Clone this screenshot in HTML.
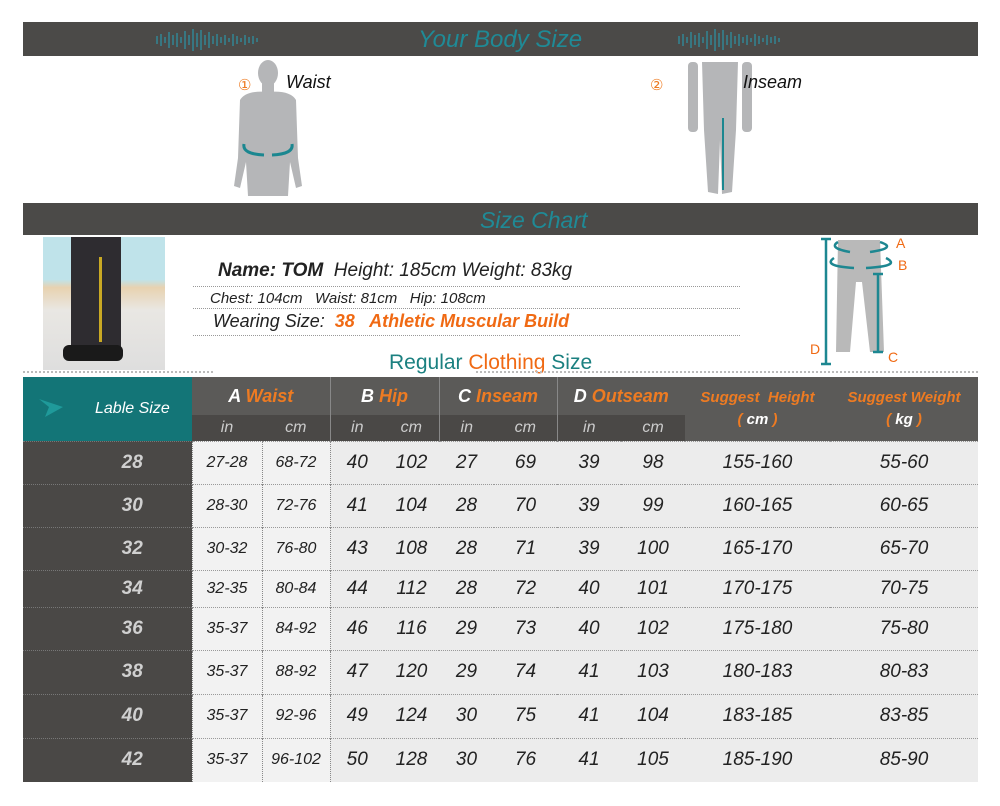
<!DOCTYPE html>
<html><head><meta charset="utf-8"><style>
*{margin:0;padding:0;box-sizing:border-box}
body{width:1000px;height:806px;background:#fff;position:relative;overflow:hidden;font-family:"Liberation Sans",sans-serif}
.a{position:absolute}
.bar{background:#4b4a48;left:23px;width:955px}
.teal{color:#1f8a96}
.or{color:#ee7b22}
table{position:absolute;left:23px;top:377px;border-collapse:collapse;table-layout:fixed;font-style:italic}
td{padding:0;text-align:center;color:#222;font-size:19px}
.h1 td{height:38px;background:#5b5a58;font-weight:bold;font-size:18px;color:#fff}
.h2 td{height:26px;background:#4a4846;color:#ccc;font-size:16px}
.r td{background:#ececec;border-top:1px dotted #999}
.r td.l{background:#4a4846;color:#d0d0d0;font-weight:bold;font-size:19px;border-top:1px dotted #777;padding-left:50px}
.r td.w{background:#f2f2f2;font-size:16px;border-left:1px dotted #888;border-right:1px dotted #888}
</style></head><body>
<div class="a bar" style="top:22px;height:34px"></div>
<div class="a teal" style="left:418px;top:26px;font-size:24px;font-style:italic">Your Body Size</div>
<svg class="a" style="left:155px;top:27px" width="150" height="26"><g stroke="#2f8fa0" stroke-width="1.3">
<path d="M2 9v8M6 7v12M10 10v6M14 5v16M18 8v10M22 6v14M26 10v6M30 4v18M34 8v10M38 2v22M42 6v14M46 3v20M50 8v10M54 5v16M58 9v8M62 7v12M66 10v6M70 8v10M74 11v4M78 7v12M82 9v8M86 11v4M90 8v10M94 10v6M98 9v8M102 11v4"/></g></svg>
<svg class="a" style="left:677px;top:27px" width="150" height="26"><g stroke="#2f8fa0" stroke-width="1.3">
<path d="M2 9v8M6 7v12M10 10v6M14 5v16M18 8v10M22 6v14M26 10v6M30 4v18M34 8v10M38 2v22M42 6v14M46 3v20M50 8v10M54 5v16M58 9v8M62 7v12M66 10v6M70 8v10M74 11v4M78 7v12M82 9v8M86 11v4M90 8v10M94 10v6M98 9v8M102 11v4"/></g></svg>
<!-- figure 1 -->
<svg class="a" style="left:230px;top:58px" width="80" height="140"><g fill="#b5b6b8">
<ellipse cx="38" cy="15" rx="10" ry="13"/><rect x="32" y="24" width="12" height="12"/>
<path d="M10 42 Q16 32 38 34 Q60 32 66 42 L68 100 L72 128 L66 130 L60 104 L58 138 L18 138 L16 104 L10 130 L4 128 L8 100Z"/></g>
<g stroke="#1b8790" stroke-width="3" fill="none"><path d="M14 86 Q12 96 34 97"/><path d="M62 86 Q64 96 42 97"/></g></svg>
<div class="a or" style="left:238px;top:76px;font-size:15px">①</div>
<div class="a" style="left:286px;top:72px;font-size:18px;font-style:italic;color:#111">Waist</div>
<!-- figure 2 -->
<svg class="a" style="left:680px;top:60px" width="80" height="136"><g fill="#b5b6b8">
<rect x="8" y="2" width="10" height="70" rx="4"/><rect x="62" y="2" width="10" height="70" rx="4"/>
<path d="M22 2 H58 L56 70 L52 132 L42 134 L40 80 L38 134 L28 132 L24 70Z"/></g>
<path d="M43 58 V130" stroke="#1b8790" stroke-width="2"/></svg>
<div class="a or" style="left:650px;top:76px;font-size:15px">②</div>
<div class="a" style="left:743px;top:72px;font-size:18px;font-style:italic;color:#111">Inseam</div>

<div class="a bar" style="top:203px;height:32px"></div>
<div class="a teal" style="left:480px;top:207px;font-size:23px;font-style:italic">Size Chart</div>
<!-- photo -->
<div class="a" style="left:43px;top:237px;width:122px;height:133px;background:linear-gradient(#bfe3ea 0,#bfe3ea 32%,#e8d2b0 38%,#e9e7e3 55%,#dedede 100%)">
<div class="a" style="left:28px;top:0;width:50px;height:120px;background:#2e2c30"></div>
<div class="a" style="left:56px;top:20px;width:3px;height:85px;background:#c9a924"></div>
<div class="a" style="left:20px;top:108px;width:60px;height:16px;background:#1a1a1a;border-radius:6px"></div></div>
<div class="a" style="left:218px;top:260px;font-size:19px;font-style:italic;color:#222"><b>Name: TOM</b>&nbsp; Height: 185cm Weight: 83kg</div>
<div class="a" style="left:193px;top:286px;width:547px;border-top:1px dotted #999"></div>
<div class="a" style="left:210px;top:290px;font-size:15px;font-style:italic;color:#222">Chest: 104cm&nbsp;&nbsp; Waist: 81cm&nbsp;&nbsp; Hip: 108cm</div>
<div class="a" style="left:193px;top:308px;width:547px;border-top:1px dotted #999"></div>
<div class="a" style="left:213px;top:311px;font-size:18px;font-style:italic;color:#222">Wearing Size:&nbsp; <b style="color:#f06a14">38&nbsp;&nbsp; Athletic Muscular Build</b></div>
<div class="a" style="left:193px;top:335px;width:547px;border-top:1px dotted #999"></div>
<div class="a" style="left:389px;top:351px;font-size:21px;color:#1b8080">Regular <span style="color:#f06a14">Clothing</span> Size</div>
<div class="a" style="left:23px;top:371px;width:190px;border-top:2px dotted #bbb"></div>
<div class="a" style="left:476px;top:371px;width:502px;border-top:2px dotted #bbb"></div>
<!-- pants icon -->
<svg class="a" style="left:810px;top:236px" width="100" height="130">
<path d="M28 4 H70 L74 116 H60 L52 46 L46 46 L40 116 H26Z" fill="#b9b9b9"/>
<g stroke="#1d8791" stroke-width="2.5" fill="none"><path d="M16 3V128M11 3H21M11 128H21"/><path d="M68 38V116M63 38H73M63 116H73"/>
<path d="M28 6 Q18 12 40 16 M60 16 Q88 12 70 6"/><path d="M24 22 Q12 30 44 32 M56 32 Q92 30 76 22"/></g>
<text x="86" y="12" fill="#f06a14" font-size="14" font-family="Liberation Sans">A</text>
<text x="88" y="34" fill="#f06a14" font-size="14" font-family="Liberation Sans">B</text>
<text x="0" y="118" fill="#f06a14" font-size="14" font-family="Liberation Sans">D</text>
<text x="78" y="126" fill="#f06a14" font-size="14" font-family="Liberation Sans">C</text></svg>

<table>
<colgroup><col style="width:169px"><col style="width:70px"><col style="width:68px"><col style="width:54px"><col style="width:55px"><col style="width:55px"><col style="width:63px"><col style="width:64px"><col style="width:64px"><col style="width:145px"><col style="width:148px"></colgroup>
<tr class="h1"><td rowspan="2" style="background:#137577;color:#fff;font-weight:normal;font-size:16px;text-align:left;padding-left:72px;position:relative"><svg style="position:absolute;left:16px;top:22px" width="26" height="20"><path d="M0 0 L24 8 L6 18 L10 8Z" fill="#1f9a9a"/></svg>Lable Size</td>
<td colspan="2" style="border-right:1px solid #888">A <span class="or">Waist</span></td><td colspan="2" style="border-right:1px solid #888">B <span class="or">Hip</span></td><td colspan="2" style="border-right:1px solid #888">C <span class="or">Inseam</span></td><td colspan="2">D <span class="or">Outseam</span></td>
<td rowspan="2" style="font-size:15px;line-height:22px;vertical-align:top;padding-top:10px"><span class="or">Suggest&nbsp; Height<br>( </span>cm<span class="or"> )</span></td>
<td rowspan="2" style="font-size:15px;line-height:22px;vertical-align:top;padding-top:10px"><span class="or">Suggest Weight<br>( </span>kg<span class="or"> )</span></td></tr>
<tr class="h2"><td>in</td><td style="border-right:1px solid #888">cm</td><td>in</td><td style="border-right:1px solid #888">cm</td><td>in</td><td style="border-right:1px solid #888">cm</td><td>in</td><td>cm</td></tr>
<tr class="r" style="height:43px"><td class="l">28</td><td class="w">27-28</td><td class="w">68-72</td><td>40</td><td>102</td><td>27</td><td>69</td><td>39</td><td>98</td><td>155-160</td><td>55-60</td></tr>
<tr class="r" style="height:43px"><td class="l">30</td><td class="w">28-30</td><td class="w">72-76</td><td>41</td><td>104</td><td>28</td><td>70</td><td>39</td><td>99</td><td>160-165</td><td>60-65</td></tr>
<tr class="r" style="height:43px"><td class="l">32</td><td class="w">30-32</td><td class="w">76-80</td><td>43</td><td>108</td><td>28</td><td>71</td><td>39</td><td>100</td><td>165-170</td><td>65-70</td></tr>
<tr class="r" style="height:37px"><td class="l">34</td><td class="w">32-35</td><td class="w">80-84</td><td>44</td><td>112</td><td>28</td><td>72</td><td>40</td><td>101</td><td>170-175</td><td>70-75</td></tr>
<tr class="r" style="height:43px"><td class="l">36</td><td class="w">35-37</td><td class="w">84-92</td><td>46</td><td>116</td><td>29</td><td>73</td><td>40</td><td>102</td><td>175-180</td><td>75-80</td></tr>
<tr class="r" style="height:44px"><td class="l">38</td><td class="w">35-37</td><td class="w">88-92</td><td>47</td><td>120</td><td>29</td><td>74</td><td>41</td><td>103</td><td>180-183</td><td>80-83</td></tr>
<tr class="r" style="height:44px"><td class="l">40</td><td class="w">35-37</td><td class="w">92-96</td><td>49</td><td>124</td><td>30</td><td>75</td><td>41</td><td>104</td><td>183-185</td><td>83-85</td></tr>
<tr class="r" style="height:44px"><td class="l">42</td><td class="w">35-37</td><td class="w">96-102</td><td>50</td><td>128</td><td>30</td><td>76</td><td>41</td><td>105</td><td>185-190</td><td>85-90</td></tr>
</table>
</body></html>
